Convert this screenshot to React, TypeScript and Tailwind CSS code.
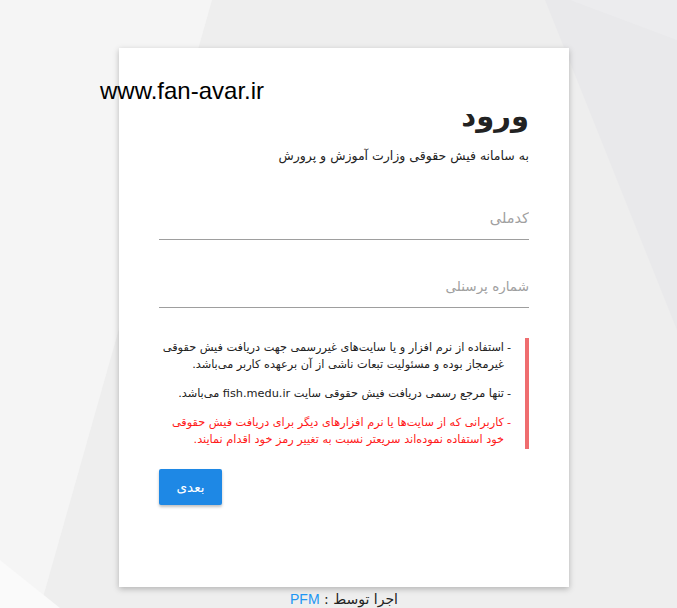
import React, { useState } from "react";

const fa = { fontFamily: '"DejaVu Sans", "Noto Sans", sans-serif' };

function Background() {
  return (
    <svg
      className="absolute inset-0 h-full w-full"
      viewBox="0 0 677 608"
      preserveAspectRatio="none"
    >
      <rect x="0" y="0" width="677" height="608" fill="#eeeeee" />
      <polygon points="0,0 212,0 40,608 0,608" fill="#f5f5f5" />
      <polygon points="0,560 60,608 0,608" fill="#fafafa" />
      <polygon points="545,0 677,0 677,330" fill="#e9e9eb" />
      <polygon points="570,0 677,0 677,40" fill="#ececee" />
    </svg>
  );
}

function Field({ placeholder, size }: { placeholder: string; size: string }) {
  const [value, setValue] = useState("");
  return (
    <input
      value={value}
      onChange={(e) => setValue(e.target.value)}
      placeholder={placeholder}
      className={"w-full h-[44px] border-b border-[#9e9e9e] bg-transparent text-[#333] outline-none placeholder:text-[#a0a0a0] " + size}
      style={fa}
    />
  );
}

function Note({ children, red }: { children: React.ReactNode; red?: boolean }) {
  return (
    <div className={"flex " + (red ? "text-[#ff1a1a]" : "text-[#222]")}>
      <span className="w-[7px] shrink-0">-</span>
      <p className="flex-1">{children}</p>
    </div>
  );
}

export default function App() {
  return (
    <div className="relative h-[608px] w-[677px] overflow-hidden">
      <Background />
      <span
        className="absolute left-[100px] top-[79px] z-10 text-[24px] leading-none text-black"
        style={{ fontFamily: '"Liberation Sans", Arial, sans-serif' }}
      >
        www.fan-avar.ir
      </span>
      <div className="relative flex flex-col items-center pl-[11px] pt-[48px]">
        <div
          dir="rtl"
          className="flex h-[539px] w-[450px] flex-col bg-white px-[40px] pt-[44px] shadow-[0_2px_6px_rgba(0,0,0,0.25)]"
          style={fa}
        >
          <h1 className="text-[29px] font-bold leading-[48px] text-[#222]">ورود</h1>
          <p className="mt-[6px] text-[12.5px] leading-[20px] text-[#222]">
            به سامانه فیش حقوقی وزارت آموزش و پرورش
          </p>
          <div className="mt-[30px]">
            <Field placeholder="کدملی" size="text-[14.5px]" />
          </div>
          <div className="mt-[24px]">
            <Field placeholder="شماره پرسنلی" size="text-[13.5px]" />
          </div>
          <div className="mt-[30px] flex flex-col gap-[12px] border-r-4 border-[#ef6d6f] py-[1px] pr-[14px] text-[11.3px] leading-[17px]">
            <Note>
              استفاده از نرم افزار و یا سایت‌های غیررسمی جهت دریافت فیش حقوقی غیرمجاز بوده و مسئولیت تبعات ناشی از آن برعهده کاربر می‌باشد.
            </Note>
            <Note>تنها مرجع رسمی دریافت فیش حقوقی سایت fish.medu.ir می‌باشد.</Note>
            <Note red>
              کاربرانی که از سایت‌ها یا نرم افزارهای دیگر برای دریافت فیش حقوقی خود استفاده نموده‌اند سریعتر نسبت به تغییر رمز خود اقدام نمایند.
            </Note>
          </div>
          <div className="mt-[20px] flex justify-end">
            <button className="h-[36px] w-[63px] rounded-[2px] bg-[#1e88e5] text-[13.5px] text-white shadow-[0_2px_3px_rgba(0,0,0,0.25)]">
              بعدی
            </button>
          </div>
        </div>
        <div dir="rtl" className="mt-[2px] text-[14px] leading-[20px] text-[#222]" style={fa}>
          اجرا توسط : <span className="text-[#2196f3]" style={{ fontFamily: '"Liberation Sans", Arial, sans-serif' }}>PFM</span>
        </div>
      </div>
    </div>
  );
}
